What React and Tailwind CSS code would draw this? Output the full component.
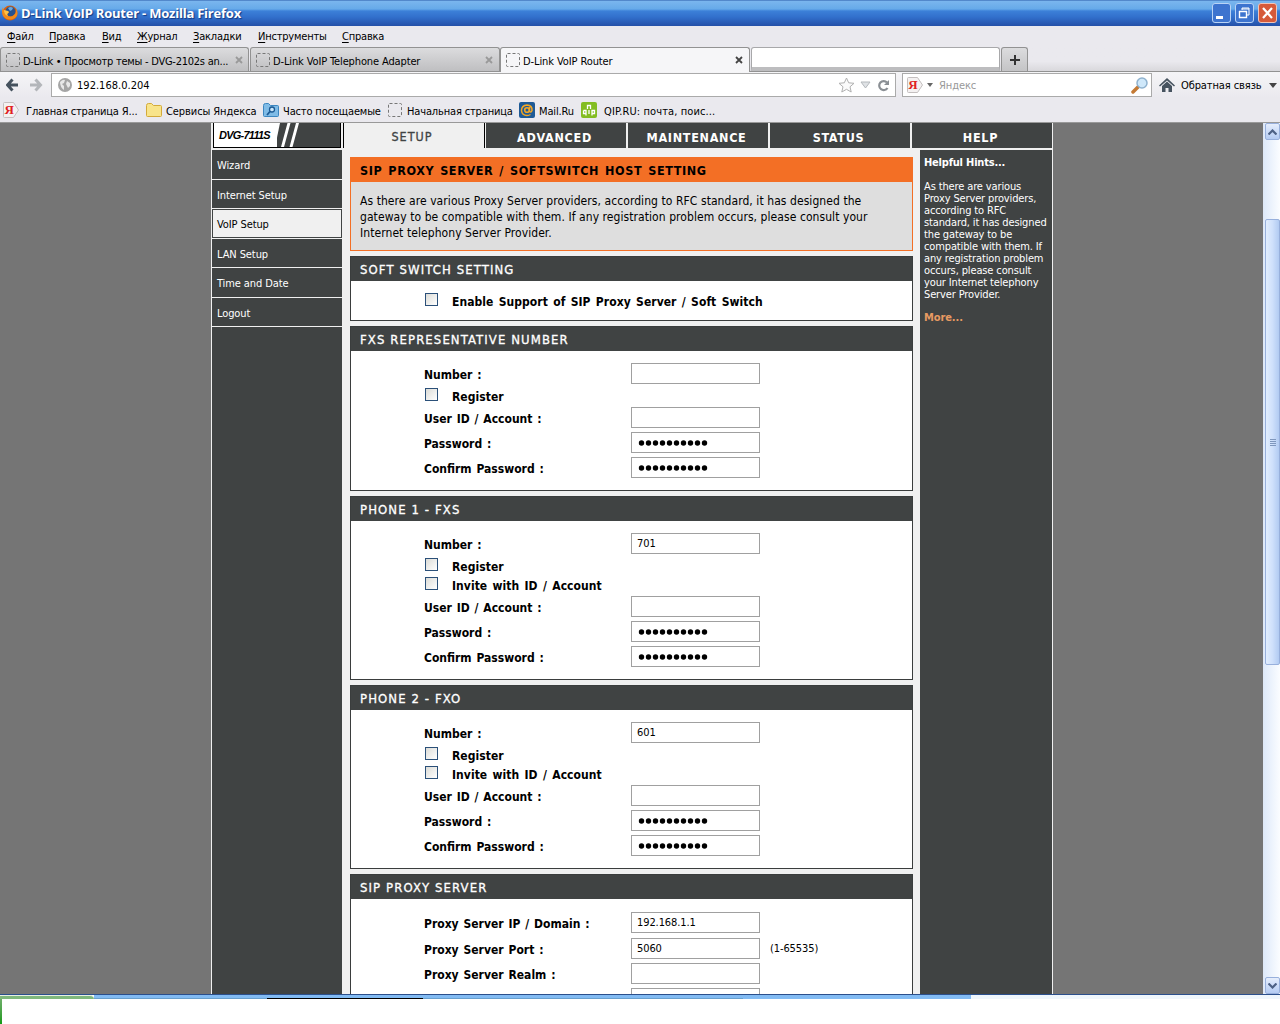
import React from "react";

const navTabs = ["ADVANCED", "MAINTENANCE", "STATUS", "HELP"];

const sideLinks = [
  { label: "Wizard", size: "h-[30px]" },
  { label: "Internet Setup", size: "h-[29px]" },
  { label: "VoIP Setup", size: "h-[30px]", active: true },
  { label: "LAN Setup", size: "h-[29px]" },
  { label: "Time and Date", size: "h-[30px]" },
  { label: "Logout", size: "h-[29px]" },
];

const Dashed = () => (
  <svg width="14" height="14" className="shrink-0">
    <rect x="0.5" y="0.5" width="13" height="13" rx="1" fill="none" stroke="#777" strokeDasharray="3 2" />
  </svg>
);

const Close = ({ color }) => (
  <svg width="8" height="8" viewBox="0 0 8 8" className="shrink-0">
    <path d="M1 1l6 6M7 1l-6 6" stroke={color} strokeWidth="1.8" />
  </svg>
);

const Yandex = () => (
  <span className="relative flex h-4 w-4 shrink-0 items-center">
    <svg width="16" height="16" className="absolute left-0 top-0">
      <path d="M1.500.5h9l5 7.500-5 7.500h-9q-1 0-1-1v-13q0-1 1-1z" fill="#f4f1f1" stroke="#c4bfbf" />
    </svg>
    <span className="relative w-[12px] text-center font-['Liberation_Serif',serif] text-[13px] font-bold leading-4 text-[#e02020]">Я</span>
  </span>
);

const MenuItem = ({ first, rest, className }) => (
  <span className={className}>
    <span className="underline underline-offset-2">{first}</span>
    {rest}
  </span>
);

const TitleBar = () => (
  <div className="flex h-[26px] items-center bg-[linear-gradient(#2a5aa8_0,#7ab6ee_1px,#66aae9_9px,#3c80d8_11px,#3270cc_17px,#2450a8_26px)] pl-[2px] pr-[3px]">
    <svg width="16" height="16" viewBox="0 0 16 16">
      <circle cx="8" cy="8" r="7.500" fill="#d9600e" />
      <circle cx="8.500" cy="6.500" r="5" fill="#27528f" />
      <path d="M6 3q3-2 5 0l-1 2-2 1z" fill="#6aa8dc" />
      <path d="M1 2q0 3 2 4l4 1-2 3q3 3 7 0 3-3 2-7 4 8-3 11-6 2-10-3Q-1 6 1 2z" fill="#f08a1c" />
      <path d="M2 5l4 1 1 1-2 2 1 2q-4-1-4-6z" fill="#ffc246" />
    </svg>
    <span className="ml-[3px] font-['Open_Sans',sans-serif] text-[13px] font-bold tracking-[-0.22px] text-white [text-shadow:1px_1px_1px_#143880]">
      D-Link VoIP Router - Mozilla Firefox
    </span>
    <div className="ml-auto flex gap-[4px]">
      <svg width="19" height="20">
        <rect x="0.5" y="0.5" width="18" height="19" rx="2.500" fill="#3d74cf" stroke="#b9d3f5" />
        <rect x="4" y="13" width="7" height="3" fill="#fff" />
      </svg>
      <svg width="19" height="20">
        <rect x="0.5" y="0.5" width="18" height="19" rx="2.500" fill="#3d74cf" stroke="#b9d3f5" />
        <path d="M7 7V5h7v7h-2M7 6h7" fill="none" stroke="#fff" />
        <path d="M4.500 8v6.500h7V8M4 8.500h8" fill="none" stroke="#fff" strokeWidth="1.400" />
      </svg>
      <svg width="19" height="20">
        <rect x="0.5" y="0.5" width="18" height="19" rx="2.500" fill="#d65a3a" stroke="#f0c4b8" />
        <path d="M5 5l9 10M14 5L5 15" stroke="#fff" strokeWidth="2.200" />
      </svg>
    </div>
  </div>
);

const MenuBar = () => (
  <div className="flex h-[21px] items-center pl-[7px] pt-px tracking-[-0.2px]">
    <MenuItem first="Ф" rest="айл" className="w-[42px]" />
    <MenuItem first="П" rest="равка" className="w-[53px]" />
    <MenuItem first="В" rest="ид" className="w-[35px]" />
    <MenuItem first="Ж" rest="урнал" className="w-[56px]" />
    <MenuItem first="З" rest="акладки" className="w-[65px]" />
    <MenuItem first="И" rest="нструменты" className="w-[84px]" />
    <MenuItem first="С" rest="правка" />
  </div>
);

const TabStrip = () => (
  <div className="flex h-[25px] border-b border-[#929292] bg-linear-to-b from-[#eae9ee] from-60% to-[#d9d8dc]">
    <div className="flex h-6 w-[249px] items-center rounded-t-[3px] border border-b-0 border-[#929292] bg-linear-to-b from-[#dcdcde] to-[#bfbfc1] pl-[5px] pr-[5px]">
      <Dashed />
      <span className="ml-[3px] mr-auto pt-[4px] tracking-[-0.25px]">D-Link • Просмотр темы - DVG-2102s an...</span>
      <Close color="#999" />
    </div>
    <div className="ml-px flex h-6 w-[250px] items-center rounded-t-[3px] border border-b-0 border-[#929292] bg-linear-to-b from-[#dcdcde] to-[#bfbfc1] pl-[5px] pr-[6px]">
      <Dashed />
      <span className="ml-[3px] mr-auto pt-[4px] tracking-[-0.13px]">D-Link VoIP Telephone Adapter</span>
      <Close color="#999" />
    </div>
    <div className="flex h-[25px] w-[250px] items-center rounded-t-[3px] border border-b-0 border-[#929292] bg-[#f6f6f8] pl-[5px] pr-[6px]">
      <Dashed />
      <span className="ml-[3px] mr-auto pt-[3px] tracking-[-0.1px]">D-Link VoIP Router</span>
      <Close color="#444" />
    </div>
    <div className="ml-px h-6 w-[249px] rounded-t-[3px] border border-b-4 border-[#a8a8aa] border-b-[#bdbdbf] bg-white" />
    <div className="ml-px flex h-6 w-[27px] items-center justify-center rounded-t-[3px] border border-b-0 border-[#929292] bg-linear-to-b from-[#dcdcde] to-[#c4c4c6]">
      <svg width="10" height="10">
        <path d="M5 0v10M0 5h10" stroke="#333" strokeWidth="2" />
      </svg>
    </div>
  </div>
);

const NavBar = () => (
  <div className="flex h-[26px] items-center bg-linear-to-b from-[#f5f5f7] to-[#eae9ee] pl-[6px]">
    <svg width="40" height="14">
      <path d="M6.500 1.500L1.500 7l5 5.500M2 7h10" fill="none" stroke="#45525e" strokeWidth="3" />
      <path d="M29.500 1.500l5 5.500-5 5.500M34 7H24" fill="none" stroke="#b3b6ba" strokeWidth="3" />
    </svg>
    <div className="ml-[5px] flex h-6 w-[845px] items-center border border-[#aaa] bg-white pl-[6px] pr-[5px]">
      <svg width="14" height="14">
        <circle cx="7" cy="7" r="7" fill="#a5a5a5" />
        <path d="M2 4q3-3 5-2l-1 3-2 1 2 2v4Q2 9 2 4zM9 3l3 2v3l-2 2-2-4z" fill="#e8e8e8" />
      </svg>
      <span className="ml-[5px] mr-auto pt-[2px] tracking-[0.02px]">192.168.0.204</span>
      <svg width="17" height="16">
        <path d="M8.500 1l2.200 4.800 5.300.5-4 3.500 1.200 5.200-4.700-2.700L3.800 15 5 9.800 1 6.300l5.300-.5z" fill="#fafafa" stroke="#b0b0b0" />
      </svg>
      <svg width="11" height="8" className="ml-[5px]">
        <path d="M1 1h9L5.500 7z" fill="#dfe2e5" stroke="#b4b8bc" />
      </svg>
      <svg width="13" height="13" className="ml-[6px]">
        <path d="M10 3.500A4.500 4.500 0 1 0 10.500 9" fill="none" stroke="#8a8f94" strokeWidth="2.200" />
        <path d="M7 6h5V1z" fill="#8a8f94" />
      </svg>
    </div>
    <div className="ml-[6px] flex h-6 w-[250px] items-center border border-[#aaa] bg-white pl-[4px] pr-[3px]">
      <Yandex />
      <svg width="6" height="4" className="ml-[4px]">
        <path d="M0 0h6L3 4z" fill="#666" />
      </svg>
      <span className="ml-[6px] mr-auto pt-[2px] tracking-[-0.1px] text-[#999]">Яндекс</span>
      <svg width="17" height="17">
        <path d="M2 15l5-5" stroke="#c47a35" strokeWidth="3.500" strokeLinecap="round" />
        <circle cx="11" cy="6" r="5" fill="#cfe8fa" stroke="#8fb2cf" strokeWidth="1.500" />
      </svg>
    </div>
    <svg width="16" height="14" className="ml-[7px]">
      <path d="M0 7.500L8 0l8 7.500-1 1L8 2.500 1 8.500z" fill="#46535f" />
      <path d="M3 8l5-4.500L13 8v6h-3.500v-4h-3v4H3z" fill="#46535f" />
    </svg>
    <span className="ml-[6px] pt-[2px] tracking-[-0.1px]">Обратная связь</span>
    <svg width="8" height="5" className="ml-auto mr-[3px]">
      <path d="M0 0h8L4 5z" fill="#444" />
    </svg>
  </div>
);

const Bookmarks = () => (
  <div className="flex h-[25px] items-center border-b border-[#999] pl-[3px] tracking-[-0.15px]">
    <div className="flex w-[143px] items-center gap-[7px]">
      <Yandex />
      <span className="pt-[3px]">Главная страница Я...</span>
    </div>
    <div className="flex w-[117px] items-center gap-[4px]">
      <svg width="16" height="14">
        <path d="M.5 2.500q0-2 2-2h3l2 2h7q1 0 1 1v9q0 1-1 1h-13q-1 0-1-1z" fill="#f8e48a" stroke="#d3aa3a" />
      </svg>
      <span className="pt-[3px] tracking-[-0.08px]">Сервисы Яндекса</span>
    </div>
    <div className="flex w-[125px] items-center gap-[4px]">
      <svg width="16" height="14">
        <path d="M.5 2.500q0-2 2-2h3l2 2h7q1 0 1 1v9q0 1-1 1h-13q-1 0-1-1z" fill="#7fbbe6" stroke="#3b86c0" />
        <circle cx="9" cy="6.500" r="2.500" fill="#c9e6fa" stroke="#1c5a94" strokeWidth="1.300" />
        <path d="M7 8.500L4 12" stroke="#1c5a94" strokeWidth="1.800" />
      </svg>
      <span className="pt-[3px]">Часто посещаемые</span>
    </div>
    <div className="flex w-[131px] items-center gap-[5px]">
      <Dashed />
      <span className="pt-[3px]">Начальная страница</span>
    </div>
    <div className="flex w-[62px] items-center gap-[4px]">
      <svg width="16" height="16">
        <rect width="16" height="16" rx="2" fill="#1e5a96" />
        <circle cx="8" cy="8" r="2.300" fill="none" stroke="#f5a623" strokeWidth="1.600" />
        <path d="M10.500 5v4.500q1.500 1.500 2.500-1 .5-5-5-5.500-5.500.5-5.500 5.500.5 5 5.500 5 2 0 3.500-1" fill="none" stroke="#f5a623" strokeWidth="1.500" />
      </svg>
      <span className="pt-[3px]">Mail.Ru</span>
    </div>
    <div className="flex items-center gap-[7px]">
      <svg width="16" height="16">
        <rect width="16" height="16" rx="2" fill="#83bd22" />
        <path d="M6.500 7V3.500h3V7M2.500 8.500h2.500v5M2.500 8.500v3H5M8 8v4M11 13.500v-5h2.500v3H11" fill="none" stroke="#fff" strokeWidth="1.300" />
      </svg>
      <span className="pt-[3px] tracking-[0.1px]">QIP.RU: почта, поис...</span>
    </div>
  </div>
);

const Panel = ({ title, className = "", children }) => (
  <section className={`border border-[#3a3d3d] bg-white ${className}`}>
    <h2 className="h-6 bg-[#404343] pl-[9px] text-[13px] leading-[25px] tracking-[1.1px] text-white [-webkit-text-stroke:0.3px_white]">{title}</h2>
    {children}
  </section>
);

const CheckRow = ({ label }) => (
  <label className="flex h-[19px] items-start">
    <span className="ml-px h-[13px] w-[13px] border border-[#2b5079] bg-linear-to-br from-[#dcdcd7] to-white" />
    <span className="ml-[14px] pt-px font-bold leading-4 tracking-[0.05px] [word-spacing:1.5px]">{label}</span>
  </label>
);

const Field = ({ label, value, password, note, className = "mb-1" }) => (
  <div className={`flex h-[21px] items-center ${className}`}>
    <span className="w-[207px] pt-[2px] font-bold [word-spacing:1.1px]">{label}</span>
    <div className="flex h-[21px] w-[129px] items-center border border-[#a0a0a0] pl-[5px] pt-px text-[11px] tracking-[-0.1px]">
      {password ? (
        <svg width="72" height="6" className="ml-px">
          {[...Array(10)].map((_, i) => (
            <circle key={i} cx={3.5 + i * 7} cy="3" r="2.7" />
          ))}
        </svg>
      ) : (
        value
      )}
    </div>
    {note && <span className="ml-[10px] pt-px text-[11px] tracking-[-0.1px]">{note}</span>}
  </div>
);

const Account = ({ title, number, invite, className }) => (
  <Panel title={title} className={className}>
    <div className="pl-[73px] pt-[12px]">
      <Field label="Number :" value={number} />
      <CheckRow label="Register" />
      {invite && <CheckRow label="Invite with ID / Account" />}
      <Field label="User ID / Account :" />
      <Field label="Password :" password />
      <Field label="Confirm Password :" password />
    </div>
  </Panel>
);

const Router = () => (
  <div className="flex w-[842px] flex-col border-x border-[#f0f0f0] bg-[#f0f0f0]">
    <div className="flex h-[27px] shrink-0">
      <div className="ml-px flex h-[25px] w-[128px] border-x border-b border-black bg-white">
        <span className="w-[63px] shrink-0 pl-[5px] pt-[3px] font-['Liberation_Sans',sans-serif] text-[11px] font-bold italic leading-[18px] tracking-[-0.75px]">
          DVG-7111S
        </span>
        <svg width="63" height="24">
          <path d="M3 0h60v24H-2z" fill="#404343" />
          <path d="M10.500 0h3L7 24H4zM19 0h3l-6.500 24h-3z" fill="#fff" />
        </svg>
      </div>
      <div className="ml-[2px] h-[25px] w-[142px] border-x border-black text-center text-[12.500px] leading-[27px] tracking-[1px] text-[#404343] [-webkit-text-stroke:0.3px_#404343]">
        <span className="relative -left-[2px]">SETUP</span>
      </div>
      {navTabs.map((tab, i) => (
        <div
          key={tab}
          className={`h-[25px] w-[140px] bg-[#404343] text-center text-[12.500px] font-bold leading-[29px] tracking-[0.7px] text-white ${i ? "ml-[2px]" : "ml-px"} pr-[3px]`}
        >
          {tab}
        </div>
      ))}
    </div>
    <div className="flex min-h-0 flex-1">
      <nav className="w-[130px] bg-[#404343] text-[11px] tracking-[-0.1px] text-white">
        {sideLinks.map(({ label, size, active }) => (
          <div
            key={label}
            className={`${size} border-b border-[#f0f0f0] pl-[5px] leading-[31px] ${active ? "bg-[#f0f0f0] text-black shadow-[inset_0_0_0_1px_#404343]" : ""}`}
          >
            {label}
          </div>
        ))}
      </nav>
      <main className="w-[578px] overflow-hidden px-2 pt-[7px] pr-[7px] text-[12px]">
        <section className="h-[94px] border border-[#f36f25] bg-[#dedede]">
          <h1 className="h-6 bg-[#f36f25] pl-[9px] text-[12.5px] font-bold leading-[26px] tracking-[0.6px] [word-spacing:1.500px]">
            SIP PROXY SERVER / SOFTSWITCH HOST SETTING
          </h1>
          <p className="whitespace-nowrap pl-[9px] pt-[11px] leading-4 tracking-[0.07px]">
            As there are various Proxy Server providers, according to RFC standard, it has designed the
            <br />
            gateway to be compatible with them. If any registration problem occurs, please consult your
            <br />
            Internet telephony Server Provider.
          </p>
        </section>
        <Panel title="SOFT SWITCH SETTING" className="mt-[5px] h-[65px]">
          <div className="pl-[73px] pt-[12px]">
            <CheckRow label="Enable Support of SIP Proxy Server / Soft Switch" />
          </div>
        </Panel>
        <Account title="FXS REPRESENTATIVE NUMBER" className="mt-[5px] h-[165px]" />
        <Account title="PHONE 1 - FXS" number="701" invite className="mt-[5px] h-[184px]" />
        <Account title="PHONE 2 - FXO" number="601" invite className="mt-[5px] h-[184px]" />
        <Panel title="SIP PROXY SERVER" className="mt-[5px] h-[184px]">
          <div className="pl-[73px] pt-[13px]">
            <Field label="Proxy Server IP / Domain :" value="192.168.1.1" className="mb-[5px]" />
            <Field label="Proxy Server Port :" value="5060" note="(1-65535)" />
            <Field label="Proxy Server Realm :" />
            <Field label="" />
          </div>
        </Panel>
      </main>
      <aside className="w-[132px] whitespace-nowrap bg-[#404343] pl-[4px] pt-[7px] text-[11px] leading-[12px] text-white">
        <b className="tracking-[-0.2px]">Helpful Hints...</b>
        <p className="mt-[12px] tracking-[-0.13px]">
          As there are various<br />
          Proxy Server providers,<br />
          according to RFC<br />
          standard, it has designed<br />
          the gateway to be<br />
          compatible with them. If<br />
          any registration problem<br />
          occurs, please consult<br />
          your Internet telephony<br />
          Server Provider.
        </p>
        <b className="mt-[11px] block tracking-[-0.1px] text-[#e79a62]">More...</b>
      </aside>
    </div>
  </div>
);

const ScrollButton = ({ d }) => (
  <div className="flex h-[17px] shrink-0 items-center justify-center rounded-[2px] border border-[#98b0dc] bg-linear-to-b from-[#e6eefc] to-[#b4cbf3]">
    <svg width="9" height="6">
      <path d={d} fill="none" stroke="#4d6185" strokeWidth="2.200" />
    </svg>
  </div>
);

const ScrollBar = () => (
  <div className="flex w-[17px] flex-col border-l border-[#dfe8f6] bg-linear-to-r from-[#dfeafa] to-[#fbfdff] pl-px">
    <ScrollButton d="M.5 5.500l4-4 4 4" />
    <div className="mt-[79px] flex h-[446px] flex-col items-center justify-center gap-px rounded-[2px] border border-[#98b0dc] bg-linear-to-r from-[#e2eefe] via-[#cfe0fb] to-[#b2cbf2]">
      <i className="h-px w-[6px] bg-[#7f97bd]" />
      <i className="h-px w-[6px] bg-[#7f97bd]" />
      <i className="h-px w-[6px] bg-[#7f97bd]" />
      <i className="h-px w-[6px] bg-[#7f97bd]" />
    </div>
    <div className="flex-1" />
    <ScrollButton d="M.5.500l4 4 4-4" />
  </div>
);

const TaskBar = () => (
  <div className="flex h-[30px] flex-col bg-white">
    <div className="flex h-[5px] border-t border-[#2b4f8c]">
      <div className="w-[94px] rounded-tr-[4px] border-t border-[#e8f0e4] bg-[#7fb87c]" />
      <div className="w-[173px] border-b border-[#68a0cf] bg-[#82bbf3]" />
      <div className="w-[156px] border-b border-black bg-[#82bbf3]" />
      <div className="w-[320px] border-b border-[#68a0cf] bg-[#82bbf3]" />
      <div className="w-[228px] bg-[#82bbf3]" />
      <div className="flex-1 bg-[#eff6fc]" />
    </div>
    <div className="w-[2px] flex-1 bg-linear-to-b from-[#6cae68] to-[#0a9a10]" />
  </div>
);

export default function App() {
  return (
    <div className="flex h-[1024px] w-[1280px] flex-col overflow-hidden bg-[#eae9ee] font-['DejaVu_Sans_Condensed','DejaVu_Sans',sans-serif] text-[11px] leading-4 text-black">
      <TitleBar />
      <MenuBar />
      <TabStrip />
      <NavBar />
      <Bookmarks />
      <div className="flex h-[871px] shrink-0 bg-[#757575]">
        <div className="w-[211px]" />
        <Router />
        <div className="flex-1" />
        <ScrollBar />
      </div>
      <TaskBar />
    </div>
  );
}
